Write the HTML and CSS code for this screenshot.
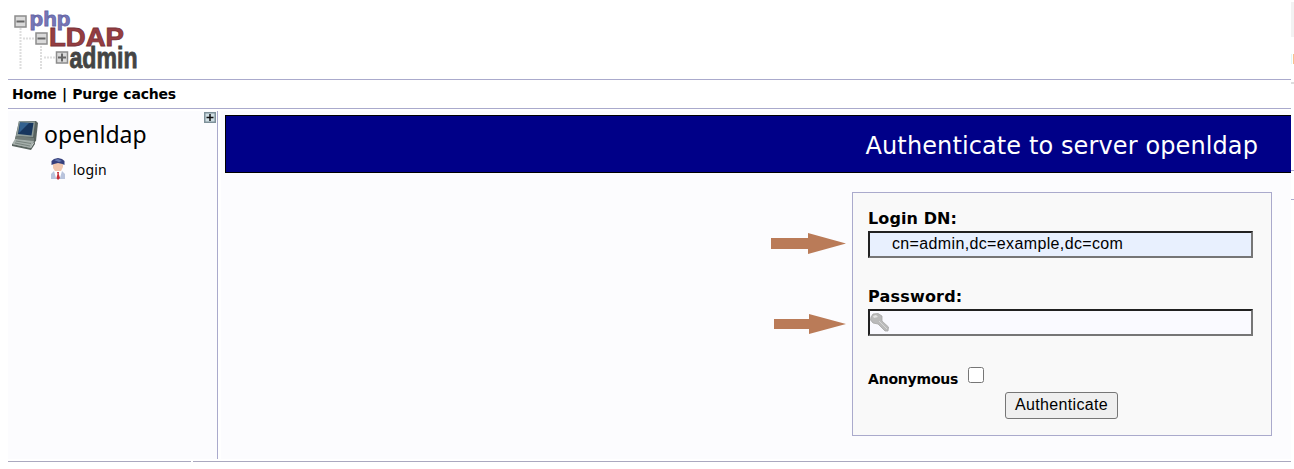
FILE: index.html
```
<!DOCTYPE html>
<html lang="en">
<head>
<meta charset="utf-8">
<title>phpLDAPadmin</title>
<link rel="stylesheet" href="styles.css">
</head>
<body>
<div class="page">
  <header class="header">
    <svg class="logo" width="128" height="62" viewBox="0 0 128 62" role="img" aria-label="phpLDAPadmin">
      <g class="tree"><path d="M10.500 20V62M13 30.500H25M31 38V62M34 49.500H45"/></g>
      <g class="node"><rect x="5" y="8" width="11" height="11"/><rect x="26" y="25" width="11" height="11"/><rect x="46.500" y="44" width="11" height="11"/></g>
      <path class="sign" d="M6.500 13.500H14.500M27.500 30.500H35.500M48 49.500H56M52 45.500V53.500"/>
      <text class="logo-php" x="19.500" y="17.500" textLength="41" lengthAdjust="spacingAndGlyphs">php</text>
      <text class="logo-ldap" x="39" y="38" textLength="75" lengthAdjust="spacingAndGlyphs">LDAP</text>
      <text class="logo-admin" x="59.500" y="59.500" textLength="68" lengthAdjust="spacingAndGlyphs">admin</text>
    </svg>
  </header>
  <nav class="menu"><a>Home</a> | <a>Purge caches</a></nav>
  <div class="columns">
    <aside class="sidebar">
      <svg class="expand" width="12" height="11" viewBox="0 0 12 11"><path fill="#7e9199" d="M0 0H12V11H0Z"/><path fill="#d0dfe4" d="M1.500 1.500H10.500V9.500H1.500Z"/><path fill="none" stroke="#111" stroke-width="1.500" d="M2.500 5.500H9.500M6 2V9"/></svg>
      <div class="server">
        <svg width="28" height="30" viewBox="0 0 28 30">
          <path fill="#59635f" d="M7 1L24 1 26 3 24 21 20 24 3 19Z"/>
          <path fill="#8d9b98" d="M7 1L23 1.500 21 17 4 16Z"/>
          <path fill="#17365e" d="M8 2.500L21.500 3 19.500 15.500 6 14Z"/>
          <path fill="#32618f" d="M8 2.500L17 3 7 13Z"/>
          <path fill="#717c78" d="M4 16L22 18V21L3 19Z"/>
          <path fill="#a4aeaa" d="M3 19L22 21 19 28 0 24Z"/>
          <path fill="#59645f" d="M0 24L19 28 23 21V24L19 30 0 26Z"/>
          <path fill="none" stroke="#78837e" d="M4 21L19 23.500M3 23L18 26"/>
        </svg>
        <span class="server-name">openldap</span>
      </div>
      <div class="login">
        <svg width="16" height="22" viewBox="0 0 16 22">
          <path fill="#f0c6ae" d="M3 5H13V9L11 13H5L3 10Z"/>
          <path fill="#353f7c" d="M1.500 7V3L4 1 8 0 12 1 14.500 3V7L12.500 6 8 5 4 6Z"/>
          <path fill="#6678b1" d="M4 2L8 1 12 3 9 4Z"/>
          <path fill="#b8c3dc" d="M1 21V16L4 13H12L15 16V21Z"/>
          <path fill="#fff" d="M4 13H12L10 20H6Z"/>
          <path fill="#c52c35" d="M7 14H9L8.700 16 10 20 8 22 6.500 20 7.500 16Z"/>
        </svg>
        <a>login</a>
      </div>
    </aside>
    <main class="content">
      <h1 class="title">Authenticate to server openldap</h1>
      <div class="form-row">
        <div class="arrows">
          <svg class="arrow-dn" width="75" height="21" viewBox="0 0 75 21"><path d="M0 5H37V0L75 10.500 37 21V16H0Z"/></svg>
          <svg class="arrow-pw" width="72" height="20" viewBox="0 0 72 20"><path d="M0 5H35V0L72 10 35 20V15H0Z"/></svg>
        </div>
        <form class="form">
          <label class="field-label dn-label" for="dn">Login DN:</label>
          <input class="field dn" id="dn" type="text" value="cn=admin,dc=example,dc=com">
          <label class="field-label second" for="pw">Password:</label>
          <div class="field password">
            <svg width="20" height="19" viewBox="0 0 20 19"><path fill="#bababa" stroke="#a6a6a6" stroke-width=".8" d="M1 4L3 1 8 .5 12 3V8L18.500 14 18 18H15L8 11 3 10 .5 7Z"/><path fill="#e3e3e3" d="M3 3L6 2 8 4 4 5Z"/><path fill="none" stroke="#d6d6d6" d="M9 8L17 16"/></svg>
            <input class="bare" id="pw" type="password">
          </div>
          <div class="anonymous"><label for="anon">Anonymous</label><input class="check" id="anon" type="checkbox"></div>
          <button class="submit" type="button">Authenticate</button>
        </form>
      </div>
    </main>
  </div>
  <footer class="footer"><span></span><span></span></footer>
</div>
<div class="edge"><i class="scroll"></i><i class="tint"></i><i class="grey"></i><i class="rule"></i><i class="rule last"></i></div>
</body>
</html>
```
FILE: styles.css
```
* { box-sizing: border-box; }
body { margin: 0; height: 469px; overflow: hidden; display: flex; background: #fff; color: #000; font-family: "DejaVu Sans", sans-serif; }
.page { width: 1291px; padding-left: 8px; }
.header { height: 79px; padding: 8px 0 0 2px; }
.logo { display: block; overflow: visible; }
.tree path { fill: none; stroke: #dedede; stroke-width: 2; stroke-dasharray: 2 1; }
.node rect { fill: #dadada; stroke: #8c8c8c; stroke-width: 1.5; }
.sign { fill: none; stroke: #666; stroke-width: 2; }
.logo text { font-family: "Liberation Sans", sans-serif; font-weight: bold; stroke-width: .8; }
.logo-php { font-size: 21px; fill: #7777b8; stroke: #6666a5; }
.logo-ldap { font-size: 25px; fill: #963d42; stroke: #793438; }
.logo-admin { font-size: 29px; fill: #444; stroke: #444; }
.menu { height: 30px; border: solid #aaaacc; border-width: 1px 0; padding-left: 4px; line-height: 28px; font-size: 14px; font-weight: bold; letter-spacing: -.2px; word-spacing: .7px; white-space: pre; }
.columns { display: flex; height: 350px; padding-top: 2px; }
.sidebar { width: 210px; flex: none; background: #fcfcfe; border-right: 1px solid #aaaacc; font-family: "Noto Sans", sans-serif; position: relative; padding: 9px 0 0 4px; }
.expand { position: absolute; right: 1px; top: 1px; }
.server { display: flex; height: 31px; gap: 4px; }
.server-name { font-size: 23px; line-height: 28px; letter-spacing: .05px; }
.login { display: flex; gap: 7px; margin: 7px 0 0 38px; font-size: 14px; line-height: 24px; letter-spacing: .15px; }
.content { flex: 1; margin-left: 3px; background: #fcfcfe; padding: 4px 0 0 4px; }
.title { margin: 0; height: 58px; background: #000088; border: 1px solid #000; border-right: 0; color: #fff; font-size: 24px; font-weight: normal; line-height: 60px; letter-spacing: .11px; text-align: right; padding-right: 33px; }
.form-row { display: flex; justify-content: flex-end; padding: 19px 19px 0 0; }
.arrows { width: 81px; height: 244px; padding-top: 41px; display: flex; flex-direction: column; }
.arrows path { fill: #ba7b58; }
.arrow-pw { margin: 60px 0 0 3px; }
.form { width: 420px; height: 244px; border: 1px solid #aaaacc; background: #f9f9f9; padding: 15px; display: flex; flex-direction: column; }
.field-label { height: 23px; font-size: 16px; line-height: 21px; font-weight: bold; letter-spacing: .2px; }
.dn-label { letter-spacing: .1px; }
.second { margin-top: 28px; }
.field { width: 385px; height: 27px; border: 2px solid #767676; border-color: #212121 #767676 #767676 #212121; border-radius: 0; font: 16px "Liberation Sans", sans-serif; }
.dn { background: #e8f0fe; padding: 0 0 2px 22px; letter-spacing: .36px; }
.password { background: #fafaff; display: flex; padding-top: 2px; }
.bare { border: 0; flex: 1; background: transparent; outline: 0; height: 19px; }
.anonymous { display: flex; height: 24px; margin-top: 31px; font-size: 14px; font-weight: bold; line-height: 25px; letter-spacing: -.2px; }
.check { margin: 0 0 0 10px; width: 16px; height: 16px; }
.submit { margin: 1px 0 0 137px; width: 113px; height: 27px; border: 1px solid #767676; border-radius: 3px; background: #efefef; color: #000; padding: 0 0 1px; font: 16px "Liberation Sans", sans-serif; letter-spacing: .33px; }
.footer { display: flex; gap: 2px; margin-top: 2px; }
.footer span { height: 1px; background: #aaa8bf; flex: 1; }
.footer span:first-child { flex: 0 0 183px; }
.edge { width: 3px; display: flex; flex-direction: column; }
.edge i { display: block; flex: none; }
.scroll { height: 35px; margin-top: 2px; background: #f2f2f2; }
.tint { height: 10px; margin-top: 17px; border-right: 1px solid #f7c28c; border-left: 1px solid #dff8f8; }
.grey { height: 2px; margin-top: 18px; background: #ddd; }
.rule { height: 1px; margin-top: 86px; background: #aaaacc; }
.last { margin-top: 28px; }
```
